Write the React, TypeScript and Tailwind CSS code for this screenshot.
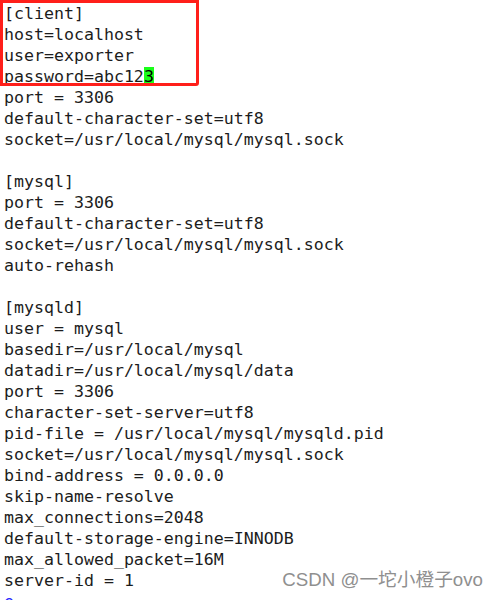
import React from "react";

const lines: string[] = [
  "[client]",
  "host=localhost",
  "user=exporter",
  "password=abc12",
  "port = 3306",
  "default-character-set=utf8",
  "socket=/usr/local/mysql/mysql.sock",
  "",
  "[mysql]",
  "port = 3306",
  "default-character-set=utf8",
  "socket=/usr/local/mysql/mysql.sock",
  "auto-rehash",
  "",
  "[mysqld]",
  "user = mysql",
  "basedir=/usr/local/mysql",
  "datadir=/usr/local/mysql/data",
  "port = 3306",
  "character-set-server=utf8",
  "pid-file = /usr/local/mysql/mysqld.pid",
  "socket=/usr/local/mysql/mysql.sock",
  "bind-address = 0.0.0.0",
  "skip-name-resolve",
  "max_connections=2048",
  "default-storage-engine=INNODB",
  "max_allowed_packet=16M",
  "server-id = 1",
];

export default function App() {
  return (
    <div className="relative h-[600px] w-[499px] overflow-hidden bg-white">
      <div className="px-[4px] pt-[3px] font-['DejaVu_Sans_Mono',monospace] text-[16.6px] leading-[21px] text-[#1c1c1c]">
        {lines.map((line, i) => (
          <div key={i} className="h-[21px] whitespace-pre">
            {line}
            {i === 3 && <span className="bg-[#19ff19] text-black">3</span>}
          </div>
        ))}
        <div className="h-[21px] whitespace-pre text-[#2a2aff]">e</div>
      </div>

      {/* red annotation box over the [client] block */}
      <div className="absolute left-0 top-0 h-[86px] w-[199px] rounded-br-[3px] border-[3px] border-[#ff1f1a]" />

      {/* watermark */}
      <div className="absolute right-[16px] top-[569px] font-['Liberation_Sans','Noto_Sans_CJK_SC',sans-serif] text-[18.7px] leading-[22px] text-[#8f8f8f] [text-shadow:0_0_1px_#fff]">
        CSDN @一坨小橙子ovo
      </div>
    </div>
  );
}
